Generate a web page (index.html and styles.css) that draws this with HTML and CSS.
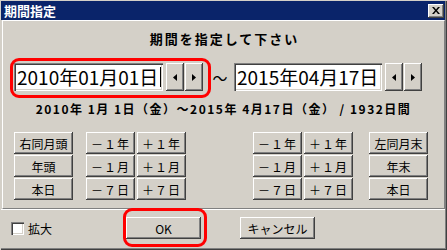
FILE: index.html
```html
<!DOCTYPE html>
<html lang="ja">
<head>
<meta charset="utf-8">
<link rel="stylesheet" href="styles.css">
</head>
<body>
<div class="window">
  <div class="titlebar">
    <span class="title">期間指定</span>
    <span class="close"><svg width="8" height="7" viewBox="0 0 8 7"><path d="M0 0h2l2 2.5L6 0h2L5 3.5 8 7H6L4 4.5 2 7H0l3-3.5z" fill="#000"/></svg></span>
  </div>
  <div class="panel">
    <div class="heading">期間を指定して下さい</div>
    <div class="daterow">
      <div class="dategroup marked">
        <div class="datebox">2010年01月01日<span class="caret"></span></div>
        <div class="spin">
          <span class="btn sbtn"><svg width="4" height="7" viewBox="0 0 4 7"><path d="M4 0v7L0 3.5z" fill="#000"/></svg></span>
          <span class="btn sbtn"><svg width="4" height="7" viewBox="0 0 4 7"><path d="M0 0v7l4-3.5z" fill="#000"/></svg></span>
        </div>
      </div>
      <span class="tilde">～</span>
      <div class="dategroup">
        <div class="datebox wide">2015年04月17日</div>
        <div class="spin">
          <span class="btn sbtn"><svg width="4" height="7" viewBox="0 0 4 7"><path d="M4 0v7L0 3.5z" fill="#000"/></svg></span>
          <span class="btn sbtn"><svg width="4" height="7" viewBox="0 0 4 7"><path d="M0 0v7l4-3.5z" fill="#000"/></svg></span>
        </div>
      </div>
    </div>
    <div class="summary">2010年 1月 1日（金）～2015年 4月17日（金） / 1932日間</div>
    <div class="btngrid">
      <div class="group">
        <span class="btn big">右同月頭</span><span class="btn">－１年</span><span class="btn">＋１年</span>
        <span class="btn big">年頭</span><span class="btn">－１月</span><span class="btn">＋１月</span>
        <span class="btn big">本日</span><span class="btn">－７日</span><span class="btn">＋７日</span>
      </div>
      <div class="group right">
        <span class="btn">－１年</span><span class="btn">＋１年</span><span class="btn big">左同月末</span>
        <span class="btn">－１月</span><span class="btn">＋１月</span><span class="btn big">年末</span>
        <span class="btn">－７日</span><span class="btn">＋７日</span><span class="btn big">本日</span>
      </div>
    </div>
  </div>
  <div class="footer">
    <label class="check"><span class="box"></span>拡大</label>
    <span class="btn action marked2">OK</span>
    <span class="btn action">キャンセル</span>
  </div>
</div>
</body>
</html>
```

FILE: styles.css
```css
* { box-sizing: border-box; }
body {
  margin: 0;
  font-family: "Noto Sans CJK JP", "Noto Sans", sans-serif;
  color: #000;
}
.window {
  width: 447px;
  height: 250px;
  background: #d4d0c8;
  padding: 1px 2px 2px 1px;
  box-shadow: inset 1px 1px #d4d0c8, inset -1px -1px #404040, inset -2px -2px #808080;
  display: flex;
  flex-direction: column;
}
.titlebar {
  height: 19px;
  background: #0a246a;
  display: flex;
  align-items: center;
  justify-content: space-between;
  padding: 0 1px 0 3px;
}
.title {
  color: #fff;
  font-weight: bold;
  font-size: 13px;
  line-height: 15px;
}
.close {
  width: 16px;
  height: 14px;
  background: #d4d0c8;
  box-shadow: inset -1px -1px #404040, inset 1px 1px #fff, inset -2px -2px #808080;
  display: flex;
  align-items: center;
  justify-content: center;
  padding-bottom: 1px;
}
.panel {
  height: 189px;
  margin-left: 1px;
  border-top: 1px solid #fff;
  border-left: 1px solid #fff;
  border-right: 1px solid #808080;
  border-bottom: 1px solid #808080;
  display: flex;
  flex-direction: column;
}
.heading {
  margin-top: 10px;
  text-align: center;
  font-weight: bold;
  font-size: 13px;
  line-height: 16px;
  letter-spacing: 2px;
  padding-left: 2px;
}
.daterow {
  margin-top: 16px;
  height: 28px;
  display: flex;
  align-items: center;
  padding-left: 11px;
}
.dategroup {
  display: flex;
  gap: 3px;
  height: 28px;
  position: relative;
}
.dategroup.marked::before {
  content: "";
  position: absolute;
  left: -4px;
  top: -5px;
  right: -8px;
  bottom: -7px;
  border: 3px solid #ff0000;
  border-radius: 9px;
}
.datebox {
  width: 149px;
  height: 28px;
  background: #fff;
  box-shadow: inset 1px 1px #808080, inset 2px 2px #404040, inset -1px -1px #fff, inset -2px -2px #d4d0c8;
  font-size: 19px;
  line-height: 28px;
  padding-left: 3px;
  display: flex;
  align-items: center;
  white-space: nowrap;
}
.datebox.wide { width: 148px; }
.caret {
  width: 1px;
  height: 20px;
  background: #000;
  margin-left: 2px;
}
.spin {
  display: flex;
  gap: 1px;
}
.btn {
  display: inline-flex;
  align-items: center;
  justify-content: center;
  background: #d4d0c8;
  box-shadow: inset -1px -1px #404040, inset 1px 1px #fff, inset -2px -2px #808080;
  font-size: 12px;
  white-space: nowrap;
}
.sbtn {
  width: 18px;
  height: 28px;
}
.tilde {
  width: 22px;
  margin-left: 6px;
  margin-right: 3px;
  font-size: 15px;
  text-align: center;
}
.summary {
  margin-top: 11px;
  text-align: center;
  font-weight: bold;
  font-size: 12px;
  line-height: 14px;
  letter-spacing: 1.5px;
}
.btngrid {
  margin-top: 16px;
  display: flex;
  justify-content: space-between;
  padding: 0 16px 0 11px;
}
.group {
  display: grid;
  grid-template-columns: 59px 49px 49px;
  grid-auto-rows: 22px;
  row-gap: 1px;
  column-gap: 2px;
}
.group > .big:first-child,
.group:not(.right) > .big { margin-right: 11px; }
.group:not(.right) { grid-template-columns: 70px 49px 49px; }
.group:not(.right) > .big { width: 59px; }
.group.right { grid-template-columns: 49px 49px 73px; }
.group.right > .big { width: 59px; justify-self: end; }
.btn { letter-spacing: 1px; }
.big { letter-spacing: 0; }
.footer {
  flex: 1;
  border-top: 1px solid #fff;
  display: flex;
  align-items: center;
  padding: 0 0 2px 10px;
}
.check {
  width: 115px;
  display: flex;
  align-items: center;
  gap: 4px;
  font-size: 12px;
}
.box {
  width: 13px;
  height: 13px;
  background: #fff;
  box-shadow: inset 1px 1px #808080, inset 2px 2px #404040, inset -1px -1px #fff, inset -2px -2px #d4d0c8;
}
.action {
  width: 75px;
  height: 22px;
  letter-spacing: 0;
}
.marked2 {
  position: relative;
  margin-right: 39px;
}
.marked2::before {
  content: "";
  position: absolute;
  left: -3px;
  top: -9px;
  right: -6px;
  bottom: -8px;
  border: 3px solid #ff0000;
  border-radius: 9px;
}
```
